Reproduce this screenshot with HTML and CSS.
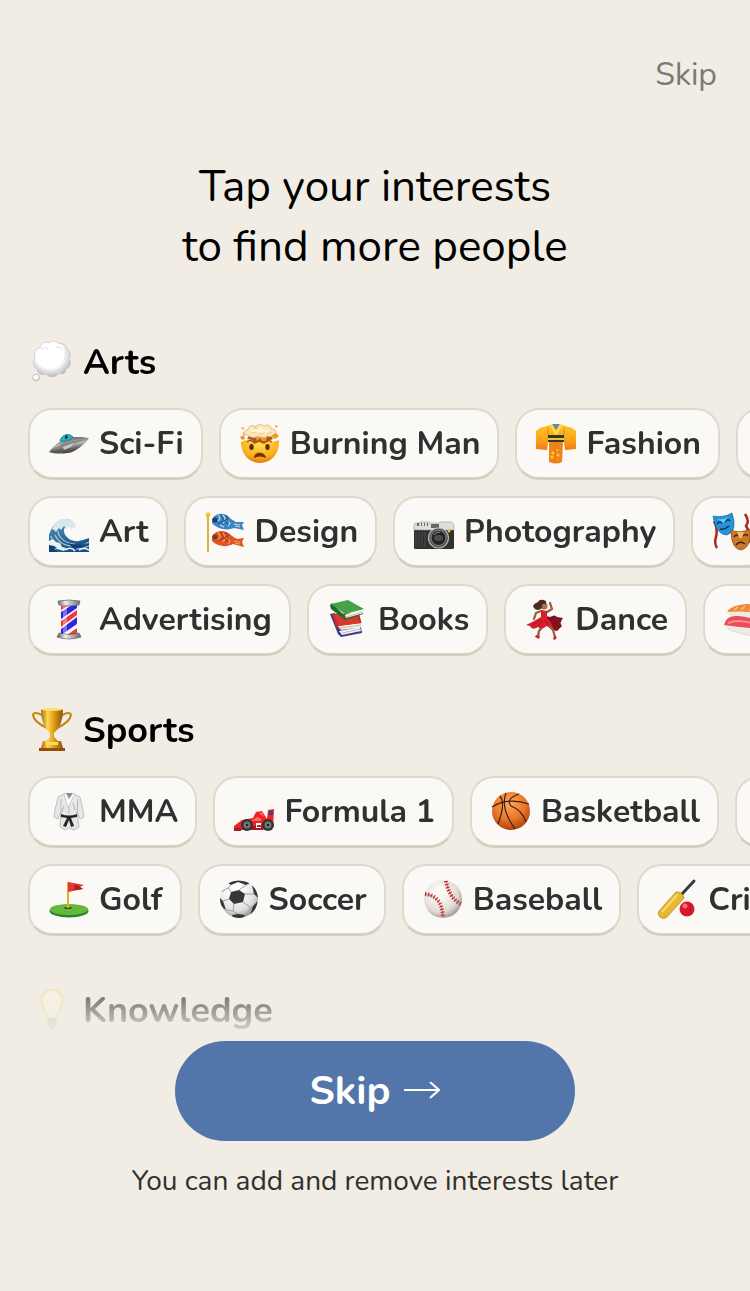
FILE: index.html
```html
<!DOCTYPE html>
<html lang="en">
<head>
  <meta charset="UTF-8">
  <meta name="viewport" content="width=device-width, initial-scale=1">
  <title>Interests</title>
  <link rel="stylesheet" href="styles.css">
</head>
<body>

  <header class="top">
    <a class="top-skip" href="#">Skip</a>
    <h1>Tap your interests<br>to find more people</h1>
  </header>

  <main class="interests">

    <section class="group">
      <h2>
        <svg class="emoji" viewBox="0 0 40 40" aria-hidden="true">
          <defs>
            <radialGradient id="cloud" cx=".45" cy=".38" r=".62"><stop offset=".6" stop-color="#fff"/><stop offset="1" stop-color="#b9b9be"/></radialGradient>
          </defs>
          <path fill="url(#cloud)" stroke="#c4c4c8" stroke-width=".7" d="M8 6C9 1 14-1 17 1C20 -2 25-1 27 2C31 0 35 4 34 7C39 8 39 14 37 17C40 21 38 26 34 27C34 32 30 33 27 31C24 36 17 36 14 32C9 34 5 31 5 27C1 25 0 18 3 16C1 11 4 6 8 6Z"/>
          <path fill="none" stroke="#dcdce0" d="M9 27Q13 31 18 29M21 30Q27 32 31 27M33 11Q35 15 32 18M9 7Q13 4 16 7M24 5Q28 4 30 8"/>
          <circle cx="4" cy="35.500" r="3.300" fill="url(#cloud)" stroke="#b0b0b5" stroke-width=".7"/>
        </svg>
        Arts
      </h2>

      <div class="row">
        <button class="chip" type="button">
          <svg class="emoji" viewBox="0 0 40 40" aria-hidden="true">
            <defs><linearGradient id="ufo" x1=".3" y1="0" x2=".6" y2="1"><stop offset="0" stop-color="#555"/><stop offset=".45" stop-color="#b9b9b9"/><stop offset=".7" stop-color="#666"/><stop offset="1" stop-color="#333"/></linearGradient></defs>
            <path fill="url(#ufo)" d="M0 28C5 22 10 17 16 15C24 12 34 13 40 14C37 19 30 25 23 28C15 30 6 30 0 28Z"/>
            <path fill="#888" d="M5 26C12 23 26 20 36 15C29 16 21 18 14 19Z"/>
            <path fill="#22b5bb" stroke="#0c777d" stroke-width=".7" d="M11 17C12 11 20 8 24 13C21 17 16 18 11 17Z"/>
            <path fill="#133" d="M16 15v-3l2-1 1 3z"/>
            <path fill="#d7d7d7" d="M14 23L25 19L22 23L15 26Z" opacity=".8"/>
            <circle cx="21" cy="28" r="1" fill="#e24"/><circle cx="12" cy="29" r=".8" fill="#2bc"/>
          </svg>
          Sci-Fi
        </button>
        <button class="chip" type="button">
          <svg class="emoji" viewBox="0 0 40 40" aria-hidden="true">
            <defs>
              <radialGradient id="face" cx=".5" cy=".2" r=".8"><stop offset="0" stop-color="#ffe14a"/><stop offset=".65" stop-color="#fcae22"/><stop offset="1" stop-color="#e17b0b"/></radialGradient>
            </defs>
            <path fill="url(#face)" d="M1 18L6 16L10 18L16 16L22 18L28 15L33 18L39 16C40 30 31 39 20 39C9 39 1 30 1 18Z"/>
            <path fill="#b5551c" d="M9 12L31 11L33 15L28 17L24 20L19 18L14 20L12 16L7 15Z"/>
            <path fill="#f09a2d" d="M14 10H27L26 17H22L20 14L17 17Z"/>
            <path fill="#f8e7ba" stroke="#dcb56c" stroke-width=".8" d="M5 11C2 8 6 5 8 6C8 2 13 0 15 3C18 0 22 0 24 2C28 0 32 2 31 5C36 5 38 9 34 12C31 14 28 11 26 13C22 15 19 11 16 13C12 15 9 11 5 11Z"/>
            <path fill="#fff7dc" d="M10 6Q13 3 16 6Q20 2 24 6Q28 4 29 8Q22 11 17 8Q13 11 10 6Z"/>
            <path fill="none" stroke="#dfc183" stroke-width=".8" d="M11 8Q13 10 16 8M19 9Q22 11 25 8M27 9Q30 10 32 8M14 4Q16 3 18 5"/>
            <path fill="#ef9727" d="M1 3l3 1-1 2zM0 13l4-2 1 4-3 1zM35 1l3 1-2 2zM31 12l5-3 3 3-4 3zM3 8l2 2-2 1z"/>
            <ellipse cx="11.500" cy="23" rx="2.200" ry="3" fill="#552b0b"/><ellipse cx="27.500" cy="23" rx="2.200" ry="3" fill="#552b0b"/>
            <path fill="none" stroke="#9a5312" stroke-width="1.200" d="M7 18Q10 15 13 18M26 18Q29 15 32 18"/>
            <path fill="#713306" d="M14 34C14 27 25 27 26 34C22 32 18 32 14 34Z"/>
          </svg>
          Burning Man
        </button>
        <button class="chip" type="button">
          <svg class="emoji" viewBox="0 0 40 40" aria-hidden="true">
            <defs><linearGradient id="kimono" x1="0" y1="0" x2="0" y2="1"><stop offset="0" stop-color="#fdc427"/><stop offset=".6" stop-color="#f9a31b"/><stop offset="1" stop-color="#ef7714"/></linearGradient></defs>
            <path fill="url(#kimono)" d="M14 1L4 4L0 7V25L11 26L12 18H28L29 26L40 25V7L36 4L26 1Z"/>
            <path fill="#f0851b" d="M13 18H27L26 38Q20 41 13 38Z"/>
            <path fill="#5f8ca8" d="M16 0H24L20 6Z"/>
            <path fill="#ffd84a" d="M14 1L16 0L20 7L24 0L27 1L21 11H19Z"/>
            <path fill="#35362c" d="M12 11H28V18H12Z"/><path fill="#e7c83b" d="M12 14H28V16H12Z"/>
            <path fill="none" stroke="#d9730d" stroke-width=".7" d="M12 4V11M28 4V11M20 18L19 38"/>
            <g fill="#ffc93f"><circle cx="17" cy="29" r="1.500"/><circle cx="22" cy="31" r="1.500"/><circle cx="16" cy="33" r="1.500"/><circle cx="21" cy="26" r="1"/></g>
            <g fill="#ee9417"><circle cx="8" cy="21" r="1"/><circle cx="32" cy="21" r="1"/><circle cx="4" cy="15" r="1"/><circle cx="36" cy="15" r="1"/></g>
          </svg>
          Fashion
        </button>
        <button class="chip chip-next" type="button" aria-label="More arts"></button>
      </div>

      <div class="row">
        <button class="chip" type="button">
          <svg class="emoji" viewBox="0 0 40 40" aria-hidden="true">
            <defs><linearGradient id="wave" x1="0" y1="0" x2=".5" y2="1"><stop offset="0" stop-color="#5798b7"/><stop offset="1" stop-color="#164f87"/></linearGradient></defs>
            <path fill="url(#wave)" d="M0 40V23C3 13 9 7 17 7C22 7 26 10 25 15C20 11 14 15 15 20C17 27 24 30 30 29Q35 28 40 26V40Z"/>
            <path fill="#d7e8e8" d="M3 17C6 9 12 6 18 7C24 7 28 12 26 17L24 14L23 18L20 14L17 17L15 14L12 18L10 16L7 20L5 18Z"/>
            <path fill="none" stroke="#a8cbd8" stroke-width="1.200" d="M6 23C9 30 16 34 24 34M9 19C9 26 18 32 26 32M2 24Q4 33 11 36M29 34Q35 33 40 30M27 37Q34 37 40 34"/>
            <path fill="#e8f2f3" d="M0 29L4 27L7 30L11 31L13 35L17 36L15 39L8 37L3 38L0 36Z"/>
            <path fill="none" stroke="#fff" stroke-width="1.500" d="M16 38Q22 34 26 39M30 38Q35 35 40 38"/>
            <path fill="#123f74" d="M0 33L5 34L8 36L5 37L9 40H0ZM19 31Q28 34 38 31Q31 37 24 36Z"/>
          </svg>
          Art
        </button>
        <button class="chip" type="button">
          <svg class="emoji" viewBox="0 0 40 40" aria-hidden="true">
            <path stroke="#d79c18" stroke-width="1.600" d="M3 3V40"/><circle cx="3" cy="3" r="2.400" fill="#f3c51f"/>
            <path fill="#3c87c1" d="M7 7C11 0 21 0 26 7L31 10L39 10L37 13L39 18L29 16C22 19 12 17 7 11Z"/>
            <path fill="#df5427" d="M7 24C12 17 21 18 27 24L32 27L39 26L37 30L39 35L28 32C21 36 12 34 7 29Z"/>
            <g fill="none" stroke="#b9dced" stroke-width="1.200"><path d="M13 3Q17 6 13 9M18 3Q22 7 18 11M23 6Q27 10 23 14M15 13l4 2M29 12l6 1M30 14l5 1"/></g>
            <g fill="none" stroke="#f6a351" stroke-width="1.200"><path d="M13 20Q17 24 13 28M18 21Q22 26 18 30M23 24Q27 28 23 32M29 29l6 1M30 31l5 1"/></g>
            <path fill="none" stroke="#23477a" d="M15 3l8 10M20 3l6 7M13 12l11-6"/>
            <path fill="none" stroke="#a92e15" d="M15 20l8 11M20 20l6 8M13 29l11-6"/>
            <circle cx="10" cy="8" r="2.500" fill="#194264"/><circle cx="10" cy="25" r="2.500" fill="#733e25"/>
          </svg>
          Design
        </button>
        <button class="chip" type="button">
          <svg class="emoji" viewBox="0 0 40 40" aria-hidden="true">
            <rect y="14" width="40" height="23" rx="1.500" fill="#303030"/>
            <path fill="#dedede" stroke="#999" stroke-width=".6" d="M1 11H6V10H14L16 11H25L26 10H38L40 13V18H0V13Z"/>
            <path fill="#666" d="M3 11h2v3H3zM7 11h1v3H7zM10 11h1v3h-1zM13 11h1v3h-1zM17 12h8v4h-8z"/>
            <path stroke="#4c4c4c" d="M2 20V35M5 20V35M8 20V35M11 20V35"/>
            <circle cx="24.500" cy="26" r="10" fill="#555" stroke="#bcbcbc" stroke-width="1.200"/>
            <circle cx="24.500" cy="26" r="7.500" fill="#242424" stroke="#858585"/><ellipse cx="24.500" cy="26" rx="4.500" ry="3" fill="#4d4d4d"/><path fill="none" stroke="#888" d="M20 23Q22 20 26 20"/>
            <circle cx="35" cy="19" r="1.500" fill="#f9bf20"/>
          </svg>
          Photography
        </button>
        <button class="chip" type="button" aria-label="Theater">
          <svg class="emoji" viewBox="0 0 40 40" aria-hidden="true">
            <path fill="none" stroke="#ad2521" stroke-width="2.500" d="M2 9Q6 17 4 25Q2 31 5 36M33 2Q38 9 34 14Q40 23 36 31"/>
            <path fill="#2493d8" stroke="#1769a3" stroke-width=".7" d="M1 4Q12 6 20 1Q26 19 15 23Q4 23 1 4Z"/>
            <path fill="none" stroke="#0c3656" stroke-width="1.600" d="M5 12Q7 9 10 11M13 10Q16 6 18 9M8 17Q13 18 17 14"/><path fill="#69c3f0" d="M5 7Q11 8 16 5L12 11Z"/>
            <path fill="#c97a2b" stroke="#87451a" stroke-width=".7" d="M19 18Q28 22 38 17Q40 34 30 38Q19 38 19 18Z"/>
            <path fill="none" stroke="#442110" stroke-width="1.600" d="M22 25Q24 22 27 24M31 24Q34 21 36 24M24 33Q28 28 33 32"/><path fill="#f5b365" d="M25 20h7l-2 6h-3z"/>
          </svg>
        </button>
      </div>

      <div class="row">
        <button class="chip" type="button">
          <svg class="emoji" viewBox="0 0 40 40" aria-hidden="true">
            <defs><linearGradient id="metal"><stop offset="0" stop-color="#555"/><stop offset=".35" stop-color="#eee"/><stop offset="1" stop-color="#666"/></linearGradient></defs>
            <path fill="#f7f7ff" d="M12 5H28V35H12Z"/>
            <path fill="#3027db" d="M12 12L23 5H28V8L12 19ZM12 29L28 17V24L12 35Z"/>
            <path fill="#ee3a3b" d="M12 6H19L12 10ZM12 21L28 10V15L12 27ZM18 35L28 28V35Z"/>
            <path fill="#fff" opacity=".35" d="M14 5H18V35H14Z"/>
            <path fill="url(#metal)" stroke="#555" stroke-width=".6" d="M9 1Q20-1 31 1L30 5Q20 7 10 5ZM10 33Q20 36 30 33L32 37Q20 41 8 37Z"/>
          </svg>
          Advertising
        </button>
        <button class="chip" type="button">
          <svg class="emoji" viewBox="0 0 40 40" aria-hidden="true">
            <path fill="#393a8b" d="M2 14L7 13L11 29L33 27L34 33L13 37L10 34Z"/><path fill="#f5f1ec" d="M11 31L32 27L33 31L14 35Z"/>
            <path fill="#bd2c2b" d="M4 14L31 13L34 25L12 29L8 27Z"/><path fill="#f8f1e8" d="M10 26L34 23V27L13 30Z"/><path fill="#d83732" d="M5 15L29 15L32 23L11 26Z"/>
            <path fill="#236a2d" d="M2 5L4 3L17 16L36 11L35 14L17 20L3 9Z"/><path fill="#f9f7ec" d="M17 15L36 9V13L18 18Z"/><path fill="#46a447" d="M3 4L20 0L36 9L17 14Z"/>
            <path fill="none" stroke="#9a948d" stroke-width=".6" d="M18 17L35 12M12 28L33 25M14 33L33 29"/>
          </svg>
          Books
        </button>
        <button class="chip" type="button">
          <svg class="emoji" viewBox="0 0 40 40" aria-hidden="true">
            <path fill="#81121d" d="M21 16L25 17Q30 14 32 17L38 18Q34 23 37 26L32 31L27 30L22 26Z"/>
            <path fill="none" stroke="#9b6042" stroke-width="2.300" stroke-linecap="round" stroke-linejoin="round" d="M16 11L11 13L9 19M22 12L27 9L25 3M20 24L14 31L13 36M23 24L28 30L30 37"/>
            <path fill="#d91f2b" d="M16 10L22 11L22 18Q27 23 28 28L23 25Q16 31 13 27Q7 31 5 26L1 25Q10 21 16 17Z"/>
            <path fill="none" stroke="#97121f" stroke-width=".8" d="M16 20L7 25M18 21L12 27M20 20L23 25"/>
            <circle cx="19" cy="6" r="3.600" fill="#ad704d"/><path fill="#4b2b20" d="M21 1Q15-2 13 2Q6 5 9 8Q12 12 17 8Q16 3 21 4Z"/>
            <path fill="#cc2630" d="M11 35l4 1-1 3-4-2zM29 36l3 1-2 3-2-1z"/>
          </svg>
          Dance
        </button>
        <button class="chip" type="button" aria-label="Food">
          <svg class="emoji" viewBox="0 0 40 40" aria-hidden="true">
            <path fill="#eee9e1" d="M4 13Q20 7 38 16V24Q20 22 5 15Z"/><path fill="#ef8b3d" d="M3 12Q7 5 22 4Q34 4 39 15Q22 10 3 12Z"/><path fill="none" stroke="#ffc589" stroke-width="1.200" d="M10 10L14 7M17 10L21 6M25 11L29 7"/>
            <path fill="#eeece9" stroke="#cfc9c2" stroke-width=".6" d="M1 23Q2 30 12 32Q24 37 39 35L37 26Z"/><path fill="#e84d5c" d="M0 25Q2 15 14 16Q33 17 40 29Q22 28 0 25Z"/><path fill="none" stroke="#ff8b92" stroke-width="2" d="M4 23Q16 18 33 25"/>
          </svg>
        </button>
      </div>
    </section>

    <section class="group">
      <h2>
        <svg class="emoji" viewBox="0 0 40 40" aria-hidden="true">
          <defs><linearGradient id="gold"><stop offset="0" stop-color="#a9680b"/><stop offset=".3" stop-color="#ffd951"/><stop offset=".55" stop-color="#e4a41a"/><stop offset="1" stop-color="#8f5308"/></linearGradient></defs>
          <path fill="none" stroke="#c7830f" stroke-width="2" d="M10 5Q2 1 1 5Q2 12 15 18M30 5Q38 1 39 5Q38 12 25 18"/>
          <path fill="url(#gold)" d="M9-1H31Q31 16 22 23V27L27 32H13L18 27V23Q9 16 9-1Z"/>
          <ellipse cx="20" cy="-.500" rx="11" ry="1.500" fill="#ffdf69"/>
          <path fill="url(#gold)" d="M11 31H29L31 38H9Z"/><path fill="#ffd95b" d="M14 32h12v3H14z"/><path fill="#994d0c" d="M7 38H33V41H7Z"/>
        </svg>
        Sports
      </h2>

      <div class="row">
        <button class="chip" type="button">
          <svg class="emoji" viewBox="0 0 40 40" aria-hidden="true">
            <path fill="#e7e7e8" stroke="#aaaaac" stroke-width=".7" d="M15 2L9 5L6 18L5 25L9 27L12 20L11 35L16 38L20 36L25 38L30 35L28 20L31 27L35 25L34 18L31 5L25 2Z"/>
            <path fill="#898b91" d="M16 1H24L20 7Z"/><path fill="#fff" stroke="#b6b6b9" stroke-width=".6" d="M15 2L17 1L20 7L24 1L26 2L19 15Z"/>
            <path fill="none" stroke="#b8b8bb" d="M12 7V20M29 7L28 20M20 14V22M15 14L13 20M24 11L26 18"/>
            <path fill="#252527" d="M12 22Q20 25 28 22V25L22 26L25 34L22 35L20 28L17 35L14 34L18 26L12 25Z"/>
          </svg>
          MMA
        </button>
        <button class="chip" type="button">
          <svg class="emoji" viewBox="0 0 40 40" aria-hidden="true">
            <path fill="#ed2126" d="M0 34L8 28L19 26L22 20L28 19L33 27L34 18L40 17L39 35L25 38L7 38L0 39Z"/>
            <path fill="#ad1623" d="M0 36h7v3H0zM18 34H31L29 38H15Z"/><path fill="#3a447b" d="M35 19h4v4h-4z"/>
            <path fill="#f46e64" d="M17 29L23 25L28 27L26 29ZM25 21l3-1 2 5z"/><path fill="#fff" d="M23 31h4v2h-4v2h4v1h-5v-5z"/>
            <circle cx="13" cy="33" r="6" fill="#333"/><circle cx="13" cy="33" r="3.500" fill="#777"/><circle cx="13" cy="33" r="1.300" fill="#222"/>
            <circle cx="34" cy="33" r="6" fill="#333"/><circle cx="34" cy="33" r="3.500" fill="#777"/><circle cx="34" cy="33" r="1.300" fill="#222"/>
          </svg>
          Formula 1
        </button>
        <button class="chip" type="button">
          <svg class="emoji" viewBox="0 0 40 40" aria-hidden="true">
            <defs><radialGradient id="ball" cx=".45" cy=".3" r=".7"><stop offset="0" stop-color="#ffa65b"/><stop offset=".6" stop-color="#e97828"/><stop offset="1" stop-color="#ad4210"/></radialGradient></defs>
            <circle cx="20" cy="19" r="19" fill="url(#ball)"/>
            <path fill="none" stroke="#40200f" stroke-width="1.200" d="M1 15Q17 5 38 12M15 1Q9 16 24 37M9 4Q15 11 7 32M28 2Q14 7 20 14Q31 18 35 30"/>
          </svg>
          Basketball
        </button>
        <button class="chip" type="button" aria-label="Running">
          <svg class="emoji" viewBox="0 0 40 40" aria-hidden="true">
            <path fill="#b95339" d="M0 25L6 23L12 29L34 31L39 36L32 38L3 36Z"/><path fill="#eee" d="M0 34L38 36V39H3Z"/>
          </svg>
        </button>
      </div>

      <div class="row">
        <button class="chip" type="button">
          <svg class="emoji" viewBox="0 0 40 40" aria-hidden="true">
            <ellipse cx="20" cy="31" rx="19.500" ry="6.500" fill="#278229"/><ellipse cx="20" cy="29.500" rx="19" ry="5.500" fill="#65b83c"/><ellipse cx="19" cy="28" rx="4" ry="1" fill="#24571d"/>
            <path stroke="#e3ae28" stroke-width="2" d="M19 2V28"/><path fill="#e33732" d="M19 2L35 5L31 7L34 9L19 12Z"/><path fill="#a8201c" d="M26 4L31 7L34 9L25 10Z"/>
          </svg>
          Golf
        </button>
        <button class="chip" type="button">
          <svg class="emoji" viewBox="0 0 40 40" aria-hidden="true">
            <defs>
              <radialGradient id="white" cx=".4" cy=".3" r=".75"><stop offset=".2" stop-color="#fff"/><stop offset=".7" stop-color="#dededf"/><stop offset="1" stop-color="#8a8a8d"/></radialGradient>
              <clipPath id="round"><circle cx="20" cy="19" r="19"/></clipPath>
            </defs>
            <g clip-path="url(#round)">
              <circle cx="20" cy="19" r="19" fill="url(#white)"/>
              <path fill="#363739" d="M12 12L20 10L26 14L24 22L15 24L10 19ZM9 3Q19-2 31 3L27 5L19 2L12 5ZM33 5Q39 10 40 19L35 14ZM0 17L4 21L7 30Q1 27 0 17ZM34 26L39 21L36 32L31 35ZM13 35L19 34L26 35L23 40H15Z"/>
              <path fill="none" stroke="#9c9da0" d="M12 12L9 8L12 5M20 10L27 5M26 14L35 14M24 22L32 28L34 26M15 24L14 31L19 34M10 19L4 21M9 8L2 12M14 31L7 30M32 28L26 35"/>
            </g>
          </svg>
          Soccer
        </button>
        <button class="chip" type="button">
          <svg class="emoji" viewBox="0 0 40 40" aria-hidden="true">
            <defs><radialGradient id="leather" cx=".4" cy=".35" r=".7"><stop offset=".2" stop-color="#fbf9f4"/><stop offset=".7" stop-color="#dedbd5"/><stop offset="1" stop-color="#98928c"/></radialGradient></defs>
            <circle cx="20" cy="19" r="19" fill="url(#leather)"/>
            <path fill="none" stroke="#c67069" stroke-width="1" d="M23 1Q26 18 38 24M2 14Q19 16 20 37"/>
            <path fill="none" stroke="#bf2c35" stroke-width="4" stroke-dasharray="1.200 1.800" d="M23 1Q26 18 38 24M2 14Q19 16 20 37"/>
          </svg>
          Baseball
        </button>
        <button class="chip" type="button">
          <svg class="emoji" viewBox="0 0 40 40" aria-hidden="true">
            <path stroke="#333a43" stroke-width="3" stroke-linecap="round" d="M24 14L36 1"/>
            <path fill="#e9b731" stroke="#bd861d" stroke-width=".8" d="M1 31L18 12Q24 11 26 18L9 37Q6 40 2 37Q-1 34 1 31Z"/><path fill="none" stroke="#f9d764" stroke-width="2" d="M4 32L20 14"/>
            <circle cx="29" cy="29" r="7.500" fill="#d51b2c"/><circle cx="27" cy="26" r="2.500" fill="#ff6971"/><path fill="none" stroke="#b01525" d="M33 23Q30 29 34 34"/>
          </svg>
          Cricket
        </button>
      </div>
    </section>

    <section class="group">
      <h2>
        <svg class="emoji" viewBox="0 0 40 40" aria-hidden="true" opacity=".7">
          <path fill="#f5df83" d="M20-1C12-1 7 5 8 12C9 19 14 22 15 29H25C26 22 31 19 32 12C33 5 28-1 20-1Z"/>
          <path fill="#fffbe6" d="M20 1C14 1 10 6 11 12C12 18 16 22 17 28H23C24 22 28 18 29 12C30 6 26 1 20 1Z"/>
          <path fill="#a6a58f" d="M15 28H25L24 35L21 39H19L16 35Z"/>
        </svg>
        Knowledge
      </h2>
    </section>

  </main>

  <footer class="bottom">
    <button class="skip-button" type="button">
      Skip
      <svg class="arrow" viewBox="0 0 36 18" aria-hidden="true"><path fill="none" stroke="#fff" stroke-width="2" d="M0 8H35M26 0L35 8L26 16"/></svg>
    </button>
    <p>You can add and remove interests later</p>
  </footer>

</body>
</html>
```
FILE: styles.css
```css
* {
  box-sizing: border-box;
}

body {
  display: flex;
  flex-direction: column;
  height: 100vh;
  margin: 0;
  background: #f1ede4;
  color: #303030;
  font-family: Nunito, Lato, sans-serif;
  overflow: hidden;
}

h1, h2, p {
  margin: 0;
}

.top {
  display: flex;
  flex-direction: column;
  padding-top: 51px;
}

.top-skip {
  align-self: flex-end;
  margin-right: 33px;
  color: #7b7973;
  font-size: 32px;
  line-height: 48px;
  text-decoration: none;
}

h1 {
  margin: 58px 0 59px;
  color: #000;
  font-size: 44px;
  font-weight: 400;
  line-height: 60px;
  text-align: center;
}

/* list fades out just above the button */
.interests {
  flex: 1;
  min-height: 0;
  padding-left: 28px;
  overflow: hidden;
  -webkit-mask-image: linear-gradient(to top, transparent, #000 90px);
  mask-image: linear-gradient(to top, transparent, #000 90px);
}

.group {
  margin-bottom: 48px;
}

h2 {
  display: flex;
  align-items: center;
  gap: 11px;
  height: 52px;
  margin-bottom: 20px;
  padding-left: 4px;
  color: #000;
  font-size: 36px;
  font-weight: 700;
}

.emoji {
  flex: none;
  width: 40px;
  height: 40px;
  overflow: visible;
}

.row {
  display: flex;
  gap: 16px;
  margin-bottom: 16px;
  overflow: hidden;
}

.row:last-child {
  margin-bottom: 0;
}

.chip {
  display: flex;
  flex: none;
  align-items: center;
  gap: 10px;
  height: 72px;
  padding: 0 17px 0 19px;
  border: 2px solid #dedace;
  border-bottom: 3px solid #d3d0c2;
  border-radius: 24px;
  background: #faf9f6;
  color: #303030;
  font-family: inherit;
  font-size: 32px;
  font-weight: 700;
}

.chip-next {
  width: 120px;
}

.bottom {
  padding-bottom: 90px;
  text-align: center;
}

.skip-button {
  display: flex;
  align-items: center;
  justify-content: center;
  gap: 14px;
  width: 400px;
  max-width: 90%;
  height: 100px;
  margin: 0 auto 20px;
  border: 0;
  border-radius: 50px;
  background: #5376aa;
  color: #fff;
  font-family: inherit;
  font-size: 40px;
  font-weight: 700;
}

.arrow {
  width: 36px;
  height: 18px;
}

.bottom p {
  font-size: 28px;
  line-height: 40px;
}
```
